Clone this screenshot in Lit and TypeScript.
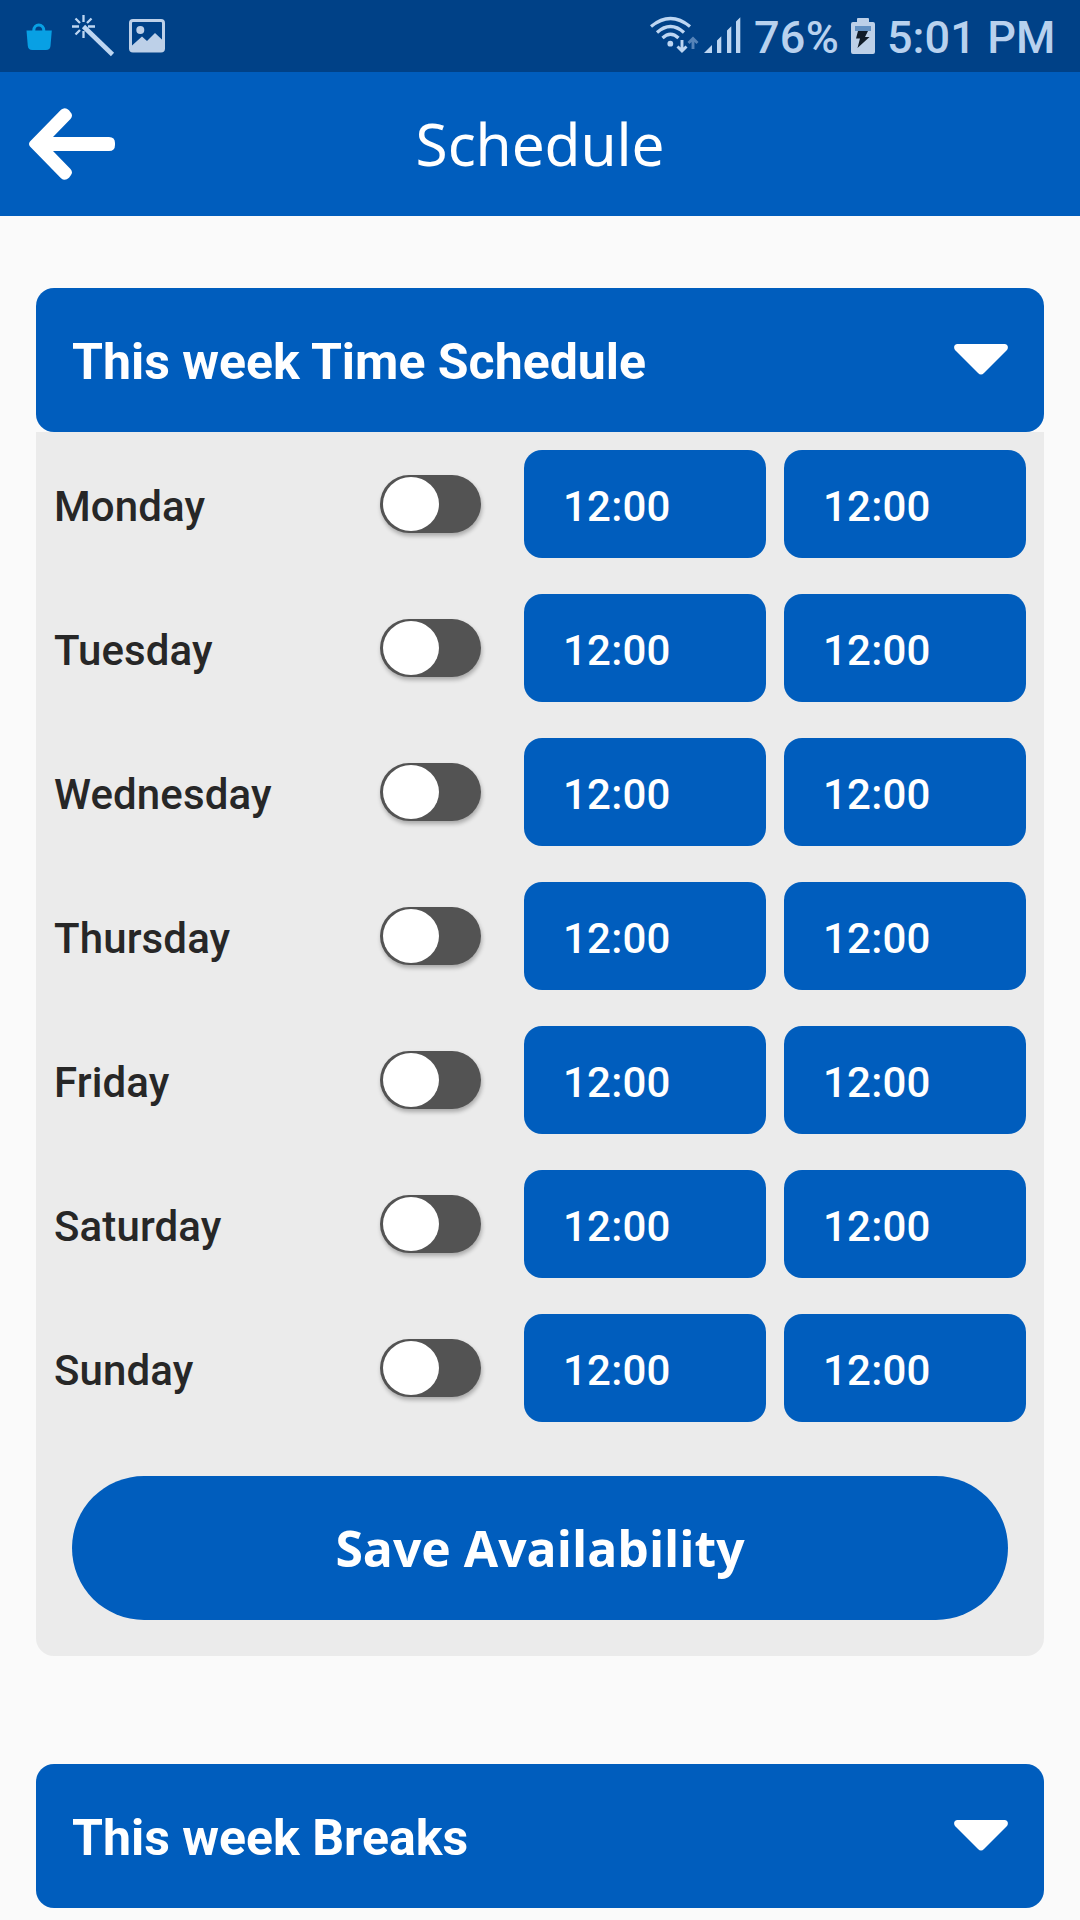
import { LitElement, html, css } from "lit";
import { customElement, property, state } from "lit/decorators.js";

interface DaySlot {
  day: string;
  enabled: boolean;
  from: string;
  to: string;
}

@customElement("status-bar")
class StatusBar extends LitElement {
  static styles = css`
    :host {
      display: flex;
      justify-content: space-between;
      box-sizing: border-box;
      height: 72px;
      background: #004187;
      color: #b8d1ee;
      font-family: Roboto, sans-serif;
      font-weight: 500;
      font-size: 45px;
      line-height: 75px;
      white-space: nowrap;
    }
    svg {
      display: block;
      flex: none;
    }
    .side {
      display: flex;
    }
    .right {
      padding-right: 24.5px;
    }
    .percent {
      width: 93.5px;
      padding-left: 5px;
      letter-spacing: 0.3px;
    }
    .clock {
      padding-left: 7.5px;
      letter-spacing: 0.1px;
    }
  `;

  render() {
    return html`
      <div class="side">
        <svg width="200" height="72" viewBox="0 0 200 72">
          <path d="M33.800 32v-1.500a5 5.500 0 0 1 10 0V32" fill="none" stroke="#08a0e4" stroke-width="3" />
          <path d="M26.500 30.500h25.300l-1.300 15.500q-.4 4-4.500 4H32.300q-4.100 0-4.500-4z" fill="#08a0e4" />
          <g stroke="#bdd6f2" fill="none">
            <path d="M83.500 26.500L112.500 54.500" stroke-width="4.600" />
            <path d="M83.500 15v7M83.500 31v7M72 26.500h7M88 26.500h7M75.500 18.500l4.500 4.500M91.500 18.500L87 23M75.500 34.500l4.500-4.500" stroke-width="2.300" />
          </g>
          <rect x="130.500" y="20.500" width="33" height="30.500" rx="2.500" fill="none" stroke="#bdd0e8" stroke-width="3" />
          <circle cx="140.300" cy="30" r="4" fill="#bdd0e8" />
          <path d="M132 45.500l10-9 5 4.500 8-8 8 7.500V50H132z" fill="#bdd0e8" />
        </svg>
      </div>
      <div class="side right">
        <svg width="99" height="72" viewBox="650 0 99 72">
          <g fill="none" stroke="#bdd6f2" stroke-width="3.300">
            <path d="M651 26.500Q670.500 10.500 690 26.500" />
            <path d="M657 32.500Q670.500 20.500 684 32.500" />
            <path d="M662.500 38Q670.500 30.500 678.500 38" />
          </g>
          <circle cx="670.300" cy="43.700" r="2.900" fill="#bdd6f2" />
          <path d="M682 40v11M677.500 46.500l4.500 4.500 4.500-4.500" fill="none" stroke="#bdd6f2" stroke-width="2.900" />
          <path d="M693 49V38.500M688.500 43l4.500-4.500 4.500 4.500" fill="none" stroke="#5583b8" stroke-width="2.900" />
          <path d="M704 53l8-8v8zM717 53V40.500l4.300-4.300V53zM727 53V30.500l4.300-4.300V53zM736 53V21.500l4.300-4.300V53z" fill="#bdd6f2" />
        </svg>
        <span class="percent">76%</span>
        <svg width="32" height="72" viewBox="847 0 32 72">
          <path d="M853 22h4v-3q0-1 1-1h10q1 0 1 1v3h4q2 0 2 2v28q0 2-2 2h-20q-2 0-2-2V24q0-2 2-2z" fill="#bdd0e8" />
          <path d="M855 26h16v5h-16z" fill="#6290c2" />
          <path d="M858 31h10l-3 6h4.500L857.500 48l2.500-9.500h-4z" fill="#111c29" />
        </svg>
        <span class="clock">5:01 PM</span>
      </div>
    `;
  }
}

@customElement("section-bar")
class SectionBar extends LitElement {
  @property() label = "";

  static styles = css`
    :host {
      display: flex;
      align-items: center;
      justify-content: space-between;
      box-sizing: border-box;
      height: 144px;
      padding: 0 36px;
      border-radius: 18px;
      background: #005dbd;
      color: #fff;
      font: 700 50px/60px Roboto, sans-serif;
      white-space: nowrap;
    }
    .label {
      padding-top: 4px;
    }
    svg {
      display: block;
      margin-bottom: 2px;
    }
  `;

  render() {
    return html`
      <span class="label">${this.label}</span>
      <svg width="54" height="31" viewBox="0 0 54 31">
        <path d="M3.500 0h47C54 0 55 4 52.500 6.500L30 29q-3 3-6 0L1.500 6.500C-1 4 0 0 3.500 0z" fill="#fff" />
      </svg>
    `;
  }
}

@customElement("day-switch")
class DaySwitch extends LitElement {
  @property({ type: Boolean }) on = false;

  static styles = css`
    :host {
      display: block;
    }
    .track {
      display: flex;
      box-sizing: border-box;
      width: 101px;
      height: 58px;
      padding: 2px 3px;
      border-radius: 29px;
      background: #535353;
      box-shadow: 1px 3px 4px rgba(0, 0, 0, 0.28);
    }
    .track.on {
      justify-content: flex-end;
    }
    .knob {
      width: 56px;
      height: 54px;
      border-radius: 50%;
      background: #fff;
    }
  `;

  render() {
    return html`<div class="track ${this.on ? "on" : ""}"><div class="knob"></div></div>`;
  }
}

@customElement("app-root")
class AppRoot extends LitElement {
  @state() private slots: DaySlot[] = [
    "Monday",
    "Tuesday",
    "Wednesday",
    "Thursday",
    "Friday",
    "Saturday",
    "Sunday",
  ].map((day) => ({ day, enabled: false, from: "12:00", to: "12:00" }));

  static styles = css`
    :host {
      display: block;
      height: 1920px;
      overflow: hidden;
      background: #fafafa;
      font-family: Roboto, sans-serif;
    }
    .header {
      display: grid;
      grid-template-columns: 144px 1fr 144px;
      align-items: center;
      height: 144px;
      background: #005dbd;
      color: #fff;
    }
    .back {
      display: block;
    }
    .title {
      padding-bottom: 2px;
      text-align: center;
      font: 400 58.5px/82px "Noto Sans", "Open Sans", sans-serif;
      letter-spacing: -0.1px;
    }
    .content {
      display: flex;
      flex-direction: column;
      padding: 72px 36px 0;
    }
    .panel {
      margin-bottom: 108px;
      padding-bottom: 36px;
      border-radius: 0 0 18px 18px;
      background: #ebebeb;
    }
    .row {
      display: grid;
      grid-template-columns: 307px 127px 242px 242px;
      column-gap: 18px;
      align-items: start;
      box-sizing: border-box;
      height: 144px;
      padding: 18px;
    }
    .day {
      color: #272727;
      font-weight: 500;
      font-size: 42px;
      line-height: 113px;
      height: 108px;
      letter-spacing: 0.12px;
    }
    .switch {
      margin-top: 25px;
      margin-left: 1px;
    }
    .time {
      box-sizing: border-box;
      height: 108px;
      padding-left: 39px;
      border-radius: 18px;
      background: #005dbd;
      color: #fff;
      font-weight: 500;
      font-size: 42px;
      line-height: 114px;
      letter-spacing: 0.2px;
    }
    .save {
      display: block;
      width: 936px;
      height: 144px;
      margin: 36px auto 0;
      padding: 0;
      border: 0;
      border-radius: 72px;
      background: #005dbd;
      color: #fff;
      font: 700 49.9px/144px "Open Sans", sans-serif;
    }
  `;

  render() {
    return html`
      <status-bar></status-bar>
      <div class="header">
        <svg class="back" width="144" height="144" viewBox="0 0 144 144">
          <path
            d="M30 69.500L61 37.800q4-3.300 8 .5l1.500 2q3 3.200 0 6.700L53 65h56q6 0 6 6v2q0 6-6 6H53l17.500 18q3 3.500 0 6.700l-1.500 2q-4 3.800-8 .5L30 74.500q-2-2.500 0-5z"
            fill="#fff"
          />
        </svg>
        <div class="title">Schedule</div>
      </div>
      <div class="content">
        <section-bar label="This week Time Schedule"></section-bar>
        <div class="panel">
          ${this.slots.map(
            (slot) => html`
              <div class="row">
                <div class="day">${slot.day}</div>
                <day-switch class="switch" ?on=${slot.enabled}></day-switch>
                <div class="time">${slot.from}</div>
                <div class="time">${slot.to}</div>
              </div>
            `
          )}
          <button class="save">Save Availability</button>
        </div>
        <section-bar label="This week Breaks"></section-bar>
      </div>
    `;
  }
}
